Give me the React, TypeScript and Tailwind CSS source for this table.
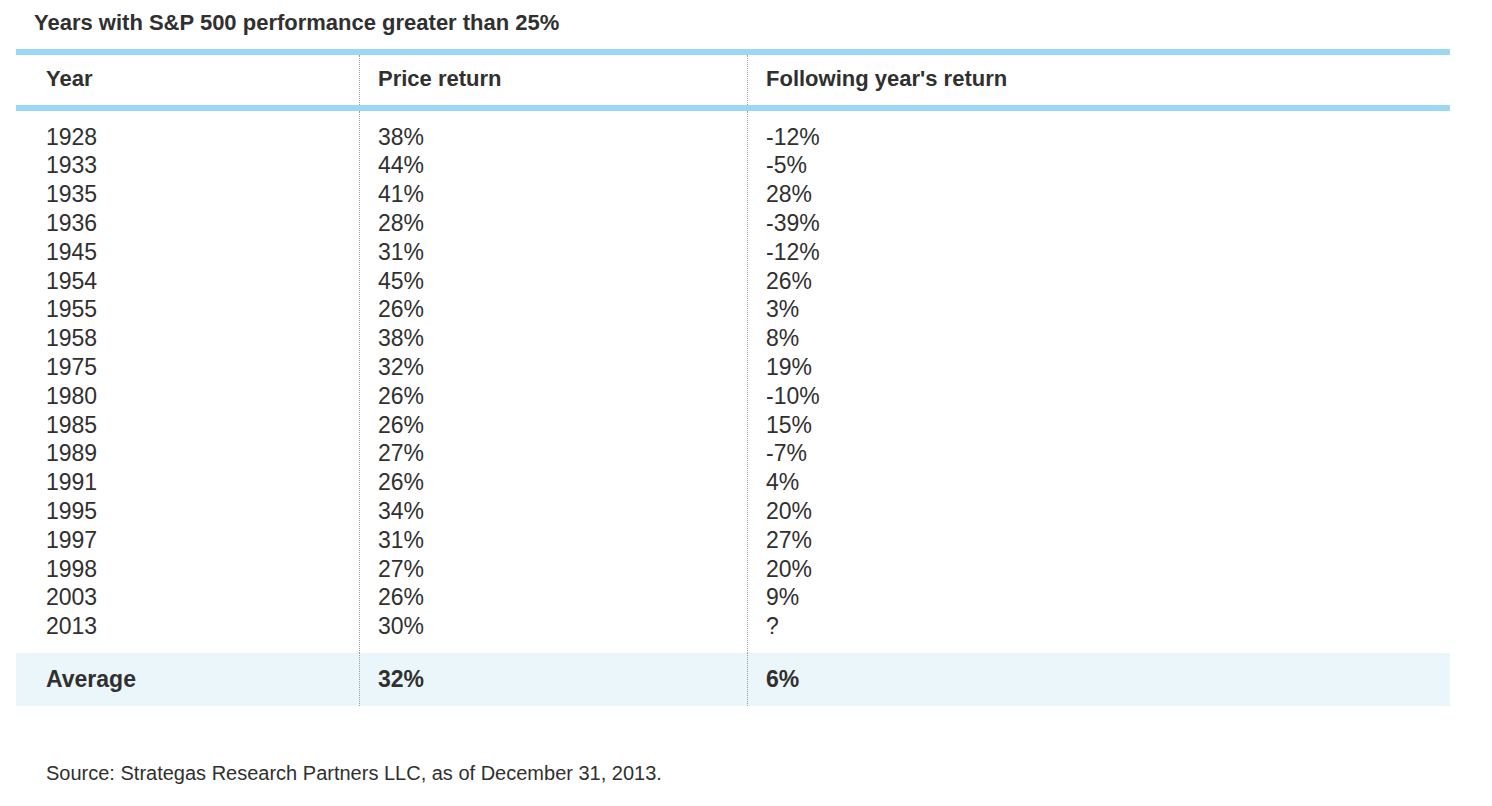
import React from "react";

const rows: [string, string, string][] = [
  ["1928", "38%", "-12%"],
  ["1933", "44%", "-5%"],
  ["1935", "41%", "28%"],
  ["1936", "28%", "-39%"],
  ["1945", "31%", "-12%"],
  ["1954", "45%", "26%"],
  ["1955", "26%", "3%"],
  ["1958", "38%", "8%"],
  ["1975", "32%", "19%"],
  ["1980", "26%", "-10%"],
  ["1985", "26%", "15%"],
  ["1989", "27%", "-7%"],
  ["1991", "26%", "4%"],
  ["1995", "34%", "20%"],
  ["1997", "31%", "27%"],
  ["1998", "27%", "20%"],
  ["2003", "26%", "9%"],
  ["2013", "30%", "?"],
];

const grid = "grid grid-cols-[343px_388px_1fr]";
const divider = "border-l border-dotted border-[#9b9b9b]";

const App: React.FC = () => {
  return (
    <div
      className="min-h-screen bg-white text-[#303030]"
      style={{ fontFamily: '"Liberation Sans", Arial, sans-serif' }}
    >
      <h1 className="pt-[11px] pl-[34px] text-[22px] leading-[24px] font-bold">
        Years with S&amp;P 500 performance greater than 25%
      </h1>

      <div className="mt-[14px] ml-[16px] w-[1434px]">
        {/* header */}
        <div className={`${grid} border-y-[6px] border-[#9bd8f2] h-[62px] text-[22px] leading-[28.8px] font-bold`}>
          <div className="pl-[30px] pt-[10px]">Year</div>
          <div className={`${divider} pl-[18px] pt-[10px]`}>Price return</div>
          <div className={`${divider} pl-[18px] pt-[10px]`}>Following year's return</div>
        </div>

        {/* body */}
        <div className={`${grid} text-[23px] leading-[28.8px]`}>
          <div className="pl-[30px] pt-[11.6px] pb-[12px]">
            {rows.map((r) => (
              <div key={r[0]}>{r[0]}</div>
            ))}
          </div>
          <div className={`${divider} pl-[18px] pt-[11.6px] pb-[12px]`}>
            {rows.map((r) => (
              <div key={r[0]}>{r[1]}</div>
            ))}
          </div>
          <div className={`${divider} pl-[18px] pt-[11.6px] pb-[12px]`}>
            {rows.map((r) => (
              <div key={r[0]}>{r[2]}</div>
            ))}
          </div>
        </div>

        {/* average */}
        <div className={`${grid} h-[53px] bg-[#ebf6fb] text-[23px] leading-[28.8px] font-bold`}>
          <div className="pl-[30px] flex items-center">Average</div>
          <div className={`${divider} pl-[18px] flex items-center`}>32%</div>
          <div className={`${divider} pl-[18px] flex items-center`}>6%</div>
        </div>
      </div>

      <p className="mt-[55px] pl-[46px] text-[20px] leading-[24px]">
        Source: Strategas Research Partners LLC, as of December 31, 2013.
      </p>
    </div>
  );
};

export default App;
